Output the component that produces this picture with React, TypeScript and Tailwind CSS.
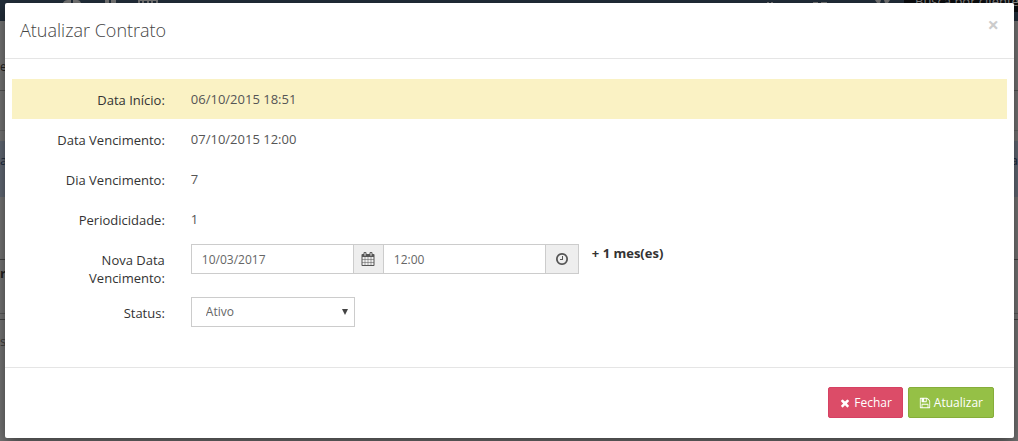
import { ReactNode, useState } from "react";

interface IIcon {
  path: string;
  className?: string;
}

interface IRow {
  label: string;
  htmlFor?: string;
  highlight?: boolean;
  children: ReactNode;
}

const ICONS = {
  calendar:
    "M192 1664h288v-288h-288v288zm352 0h320v-288h-320v288zm-352-352h288v-320h-288v320zm352 0h320v-320h-320v320zm-352-384h288v-288h-288v288zm736 736h320v-288h-320v288zm-384-736h320v-288h-320v288zm768 736h288v-288h-288v288zm-384-352h320v-320h-320v320zm-352-864v-288q0-13-9.5-22.5t-22.5-9.5h-64q-13 0-22.5 9.5t-9.5 22.5v288q0 13 9.5 22.5t22.5 9.5h64q13 0 22.5-9.5t9.5-22.5zm736 864h288v-320h-288v320zm-384-384h320v-288h-320v288zm384 0h288v-288h-288v288zm32-480v-288q0-13-9.5-22.5t-22.5-9.5h-64q-13 0-22.5 9.5t-9.5 22.5v288q0 13 9.5 22.5t22.5 9.5h64q13 0 22.5-9.5t9.5-22.5zm384-64v1280q0 52-38 90t-90 38h-1408q-52 0-90-38t-38-90v-1280q0-52 38-90t90-38h128v-96q0-66 47-113t113-47h64q66 0 113 47t47 113v96h384v-96q0-66 47-113t113-47h64q66 0 113 47t47 113v96h128q52 0 90 38t38 90z",
  clock:
    "M1024 544v448q0 14-9 23t-23 9h-320q-14 0-23-9t-9-23v-64q0-14 9-23t23-9h224v-352q0-14 9-23t23-9h64q14 0 23 9t9 23zm416 352q0-148-73-273t-198-198-273-73-273 73-198 198-73 273 73 273 198 198 273 73 273-73 198-198 73-273zm224 0q0 209-103 385.5t-279.5 279.5-385.5 103-385.5-103-279.5-279.5-103-385.5 103-385.5 279.5-279.5 385.5-103 385.5 103 279.5 279.5 103 385.5z",
  times:
    "M1490 1322q0 40-28 68l-136 136q-28 28-68 28t-68-28l-294-294-294 294q-28 28-68 28t-68-28l-136-136q-28-28-28-68t28-68l294-294-294-294q-28-28-28-68t28-68l136-136q28-28 68-28t68 28l294 294 294-294q28-28 68-28t68 28l136 136q28 28 28 68t-28 68l-294 294 294 294q28 28 28 68z",
  save: "M512 1536h768v-384h-768v384zm896 0h128v-896q0-14-10-38.5t-20-34.5l-281-281q-10-10-34-20t-39-10v416q0 40-28 68t-68 28h-576q-40 0-68-28t-28-68v-416h-128v1280h128v-416q0-40 28-68t68-28h832q40 0 68 28t28 68v416zm-384-928v-320q0-13-9.5-22.5t-22.5-9.5h-192q-13 0-22.5 9.5t-9.5 22.5v320q0 13 9.5 22.5t22.5 9.5h192q13 0 22.5-9.5t9.5-22.5zm640 32v928q0 40-28 68t-68 28h-1344q-40 0-68-28t-28-68v-1344q0-40 28-68t68-28h928q40 0 88 20t76 48l280 280q28 28 48 76t20 88z",
};

const classNameInput =
  "h-[30px] w-[163px] border border-[#ccc] bg-white px-[10px] text-xs text-[#666] outline-none focus:border-[#999]";

const classNameButton =
  "flex h-[31px] cursor-pointer items-center gap-[3px] rounded-[2px] border px-[10px] text-xs text-white";

function Icon({ path, className }: IIcon) {
  return (
    <svg viewBox="0 0 1792 1792" fill="currentColor" className={className}>
      <path d={path} />
    </svg>
  );
}

// Dimmed page that stays visible around the dialog
function Backdrop() {
  return (
    <div
      aria-hidden="true"
      className="absolute inset-0 -z-10 overflow-hidden bg-[#777] text-[13px] text-[#222]"
    >
      <div className="flex h-[21px] items-start justify-between bg-[#222e3a]">
        <svg width="160" height="3" fill="#777">
          <path d="M63 3q1-3 5-3h3v3zM73 3v-3h4q3 0 4 3zM105 0h4v3h-4zM111 0h5v3h-5zM138 0h20v1h-20zM138 1h2v2h-2zM142 1h2v2h-2zM147 1h2v2h-2zM151 1h2v2h-2zM156 1h2v2h-2z" />
        </svg>
        <div className="flex">
          <svg width="137" height="3" fill="#777">
            <path d="M0 2h2v1h-2zM4 2h2v1h-2zM46 2h5v1h-5zM54 2h6v1h-6zM108 0h6l-1 3h-3zM117 0h6l-2 3h-3z" />
          </svg>
          <div className="h-3 w-[114px] overflow-hidden bg-[#0b0d0f] pl-[11px] leading-[2px] whitespace-nowrap text-[#888]">
            Busca por cliente
          </div>
        </div>
      </div>
      <div className="h-[70px] border-b border-[#555] pt-[38px] text-xs">
        er
      </div>
      <div className="h-[40px] border-b border-[#666]" />
      <div className="h-[10px]" />
      <div className="flex h-[56px] justify-between bg-[#636a76] pt-[10px] text-[#18283d]">
        <span>a</span>
        <span>a</span>
      </div>
      <div className="h-[63px] border-b border-[#444]" />
      <div className="h-[54px] border-b border-[#5c5c5c] pt-1 font-bold">r</div>
      <div className="h-[6px] border-b border-[#444]" />
      <div className="pt-3 text-[#3d3d3d]">s</div>
    </div>
  );
}

function Row({ label, htmlFor, highlight, children }: IRow) {
  const className =
    "w-1/6 shrink-0 px-[13px] pt-[7px] text-right leading-[18px] text-[#333]";

  return (
    <div className={`flex py-[5px] ${highlight ? "bg-[#faf2c4]" : ""}`}>
      {htmlFor ? (
        <label htmlFor={htmlFor} className={className}>
          {label}
        </label>
      ) : (
        <span className={className}>{label}</span>
      )}
      <div className="flex min-h-[30px] grow items-start pl-[13px] leading-[30px] text-[#555]">
        {children}
      </div>
    </div>
  );
}

function App() {
  const [date, setDate] = useState("10/03/2017");
  const [time, setTime] = useState("12:00");
  const [status, setStatus] = useState("Ativo");

  return (
    <div className="relative isolate min-h-screen px-[5px] pt-[3px] pr-1 pb-[3px] font-['Open_Sans',sans-serif] text-[13px]">
      <Backdrop />
      <div
        role="dialog"
        aria-labelledby="dialog-title"
        className="rounded-[2px] bg-white shadow-[0_5px_15px_rgba(0,0,0,0.5)]"
      >
        <div className="flex items-start justify-between border-b border-[#e5e5e5] px-[15px] pt-[13px] pb-[14px]">
          <h4
            id="dialog-title"
            className="text-[18px] leading-7 font-light text-[#444]"
          >
            Atualizar Contrato
          </h4>
          <button
            type="button"
            aria-label="Fechar janela"
            className="cursor-pointer pt-px text-[20px] leading-4 font-bold text-[#ccc] hover:text-[#888]"
          >
            ×
          </button>
        </div>

        <form onSubmit={(e) => e.preventDefault()}>
          <div className="px-[7px] pt-5 pb-[35px]">
            <Row label="Data Início:" highlight>
              06/10/2015 18:51
            </Row>
            <Row label="Data Vencimento:">07/10/2015 12:00</Row>
            <Row label="Dia Vencimento:">7</Row>
            <Row label="Periodicidade:">1</Row>
            <Row label="Nova Data Vencimento:" htmlFor="date">
              <input
                id="date"
                className={classNameInput}
                value={date}
                onChange={(e) => setDate(e.target.value)}
              />
              <button
                type="button"
                aria-label="Calendário"
                className="flex h-[30px] w-[29px] items-center justify-center border-y border-[#ccc] bg-[#eee]"
              >
                <Icon path={ICONS.calendar} className="size-[14px]" />
              </button>
              <input
                aria-label="Hora"
                className={classNameInput}
                value={time}
                onChange={(e) => setTime(e.target.value)}
              />
              <button
                type="button"
                aria-label="Relógio"
                className="flex h-[30px] w-[33px] items-center justify-center border border-l-0 border-[#ccc] bg-[#eee]"
              >
                <Icon path={ICONS.clock} className="size-[14px]" />
              </button>
              <strong className="ml-[13px] leading-[18px] font-bold text-[#333]">
                + 1 mes(es)
              </strong>
            </Row>
            <Row label="Status:" htmlFor="status">
              <div className="relative">
                <select
                  id="status"
                  className="block h-[30px] w-[164px] appearance-none border border-[#ccc] bg-white px-[14px] text-xs text-[#666] outline-none"
                  value={status}
                  onChange={(e) => setStatus(e.target.value)}
                >
                  <option>Ativo</option>
                  <option>Inativo</option>
                </select>
                <svg
                  viewBox="0 0 6 6"
                  fill="#444"
                  className="pointer-events-none absolute top-3 right-[7px] size-[6px]"
                >
                  <path d="M0 0h6L3 6z" />
                </svg>
              </div>
            </Row>
          </div>

          <div className="flex justify-end gap-[5px] border-t border-[#e5e5e5] px-5 pt-[19px] pb-5">
            <button
              type="button"
              className={`${classNameButton} border-[#d64163] bg-[#dc4c68]`}
            >
              <Icon path={ICONS.times} className="size-3" />
              Fechar
            </button>
            <button
              type="submit"
              className={`${classNameButton} border-[#86ad3a] bg-[#95c046]`}
            >
              <Icon path={ICONS.save} className="size-3" />
              Atualizar
            </button>
          </div>
        </form>
      </div>
    </div>
  );
}

export default App;
